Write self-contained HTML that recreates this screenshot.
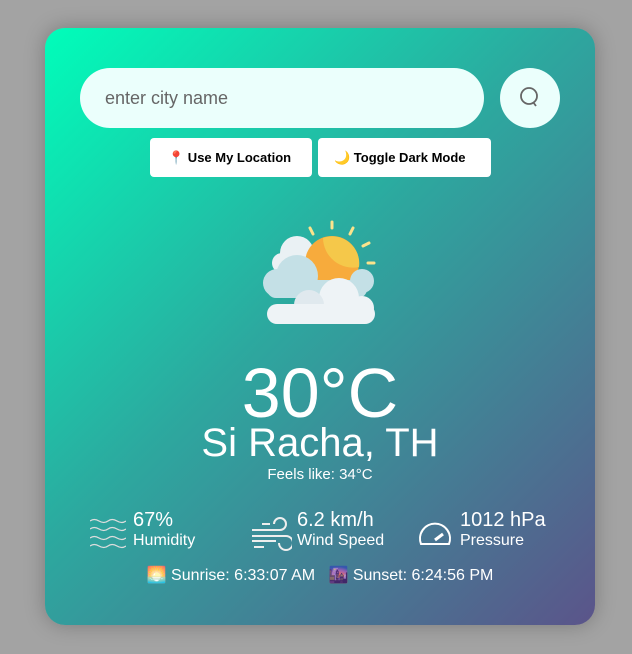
<!DOCTYPE html>
<html><head><style>
body{margin:0;width:632px;height:654px;background:#a3a3a3;font-family:"Liberation Sans",sans-serif;position:relative;overflow:hidden}
.card{position:absolute;left:45px;top:28px;width:550px;height:597px;border-radius:20px;background:linear-gradient(135deg,#00feba 0%,#2ca99f 45%,#5b548a 100%);box-shadow:0 0 20px rgba(0,0,0,.25);color:#fff}
.inp{position:absolute;left:35px;top:40px;width:404px;height:60px;border-radius:30px;background:#ebfffc;color:#666;font-size:18px;line-height:60px;box-sizing:border-box;padding-left:25px}
.sb{position:absolute;left:455px;top:40px;width:60px;height:60px;border-radius:50%;background:#ebfffc}
.btn{position:absolute;top:110px;height:39px;background:#fff;border-radius:4px;color:#000;font-weight:bold;font-size:13px;line-height:39px;box-sizing:border-box}
.c{position:absolute;left:0;width:550px;text-align:center}
.d{position:absolute;top:482px}
.v{font-size:20px;line-height:21px}.l{font-size:16px;line-height:20px}
</style></head><body>
<div class="card">
<div class="inp">enter city name</div>
<div class="sb"><svg width="60" height="60"><circle cx="29" cy="28" r="8" fill="none" stroke="#666" stroke-width="1.8"/><line x1="33" y1="34" x2="36" y2="38" stroke="#666" stroke-width="1.8"/></svg></div>
<div class="btn" style="left:105px;width:162px;padding-left:18px"><span style="color:#e0148a">📍</span> Use My Location</div>
<div class="btn" style="left:273px;width:173px;padding-left:16px"><span style="color:#f2b632">🌙</span> Toggle Dark Mode</div>
<svg style="position:absolute;left:212px;top:190px" width="125" height="110" viewBox="0 0 125 110">
<g stroke="#fbe38c" stroke-width="3" stroke-linecap="round"><line x1="75" y1="4" x2="75" y2="10"/><line x1="53" y1="10" x2="56" y2="16"/><line x1="96" y1="10" x2="93" y2="16"/><line x1="112" y1="25" x2="106" y2="28"/><line x1="117" y1="45" x2="111" y2="45"/></g>
<circle cx="40" cy="35" r="17" fill="#eaf1f4"/><circle cx="25" cy="45" r="10" fill="#eaf1f4"/>
<circle cx="75" cy="45" r="27" fill="#f7ab3c"/><path d="M66 20a27 27 0 0 1 36 29a30 30 0 0 1-36-29z" fill="#f5c84a"/>
<circle cx="40" cy="58" r="21" fill="#c4e0e6"/><circle cx="20" cy="65" r="14" fill="#c4e0e6"/><circle cx="105" cy="63" r="12" fill="#c4e0e6"/><rect x="10" y="62" width="100" height="18" rx="9" fill="#c4e0e6"/>
<circle cx="82" cy="80" r="20" fill="#eef3f6"/><circle cx="52" cy="87" r="15" fill="#e0e9ee"/><circle cx="105" cy="90" r="12" fill="#eef3f6"/><rect x="10" y="86" width="108" height="20" rx="10" fill="#eef3f6"/>
</svg>
<div class="c" style="top:325px;font-size:70px;line-height:80px">30°C</div>
<div class="c" style="top:393px;font-size:40px;line-height:44px">Si Racha, TH</div>
<div class="c" style="top:438px;font-size:15px;line-height:18px">Feels like: 34°C</div>
<svg class="d" style="left:45px;top:488px" width="36" height="36" fill="none" stroke="#ddd" stroke-width="1.3"><path d="M0 5q4-3 9 0t9 0t9 0t9 0M0 13q4-3 9 0t9 0t9 0t9 0M0 22q4-3 9 0t9 0t9 0t9 0M0 30q4-3 9 0t9 0t9 0t9 0"/></svg>
<div class="d" style="left:88px"><div class="v">67%</div><div class="l">Humidity</div></div>
<svg class="d" style="left:207px;top:489px" width="40" height="34" fill="none" stroke="#eee" stroke-width="2"><path d="M0 13h28a6 6 0 1 0-6-6M0 19h34a7 7 0 1 1-7 7M0 24h24M10 7h8M2 30h10"/></svg>
<div class="d" style="left:252px"><div class="v">6.2 km/h</div><div class="l">Wind Speed</div></div>
<svg class="d" style="left:372px;top:490px" width="36" height="30" fill="none" stroke="#fff" stroke-width="2"><path d="M4 26a15 15 0 1 1 28 0z"/><path d="M18 22l8-6" stroke-width="3"/></svg>
<div class="d" style="left:415px"><div class="v">1012 hPa</div><div class="l">Pressure</div></div>
<div class="c" style="top:539px;font-size:16px;line-height:18px">🌅 Sunrise: 6:33:07 AM &nbsp; 🌆 Sunset: 6:24:56 PM</div>
</div>
</body></html>
